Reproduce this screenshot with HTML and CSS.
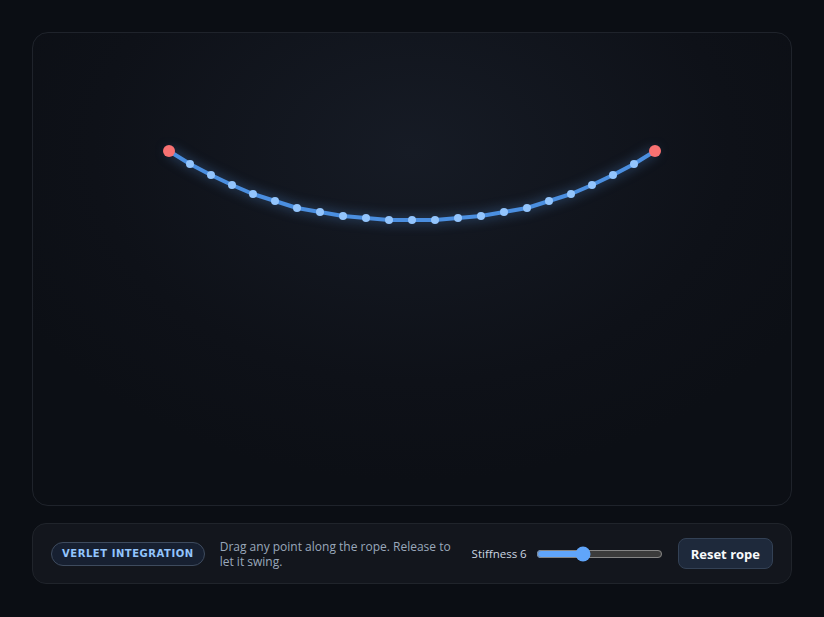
FILE: index.html
```html
<!DOCTYPE html>
<html lang="en">
<head>
  <meta charset="UTF-8">
  <title>Verlet rope</title>
  <link rel="stylesheet" href="styles.css">
</head>
<body>
  <div class="stage">
    <canvas id="rope" width="758" height="472"></canvas>
  </div>
  <div class="controls">
    <span class="badge">Verlet integration</span>
    <p class="hint">Drag any point along the rope. Release to let it swing.</p>
    <label class="stiffness">
      <span id="stiffLabel">Stiffness 6</span>
      <input type="range" id="stiff" min="1" max="15" value="6">
    </label>
    <button type="button" id="reset">Reset rope</button>
  </div>
  <script src="rope.js"></script>
</body>
</html>
```

FILE: styles.css
```css
*{
	box-sizing: border-box;
}
body{
	margin: 0;
	padding: 32px;
	background: #0b0e14;
	font-family: "Open Sans", "Noto Sans", sans-serif;
	color: #cbd5e1;
}
.stage{
	height: 474px;
	border: 1px solid #1f232b;
	border-radius: 16px;
	overflow: hidden;
	background: radial-gradient(ellipse 60% 70% at 50% 25%, #161b25 0%, #0e1118 70%, #0c0f15 100%);
}
.stage canvas{
	display: block;
}
.controls{
	margin-top: 17px;
	height: 61px;
	display: flex;
	align-items: center;
	padding: 0 18px;
	border: 1px solid #20242b;
	border-radius: 14px;
	background: #13161d;
}
.badge{
	flex-shrink: 0;
	white-space: nowrap;
	padding: 5px 10px 6px;
	border: 1px solid #3e4b5e;
	border-radius: 999px;
	background: #172031;
	color: #93c5fd;
	font-family: "DejaVu Sans", sans-serif;
	font-size: 10px;
	font-weight: bold;
	letter-spacing: 0.55px;
	text-transform: uppercase;
}
.hint{
	flex-shrink: 0;
	margin: 0 0 0 15px;
	width: 234px;
	font-size: 12px;
	line-height: 15px;
	color: #9aa8bb;
}
.stiffness{
	flex-shrink: 0;
	white-space: nowrap;
	margin-left: auto;
	display: flex;
	align-items: center;
	gap: 9px;
	font-size: 11.5px;
	color: #cbd5e1;
}
.stiffness input{
	width: 127px;
	margin: 0;
	accent-color: #60a5fa;
	color-scheme: dark;
}
#reset{
	flex-shrink: 0;
	white-space: nowrap;
	margin-left: 15px;
	height: 31px;
	padding: 0 12px;
	border: 1px solid #334155;
	border-radius: 8px;
	background: #1e293b;
	color: #f8fafc;
	font-family: inherit;
	font-size: 13px;
	font-weight: bold;
	cursor: pointer;
}
```

FILE: rope.js
```javascript
// rope at rest, hung between two pinned ends
var canvas = document.getElementById('rope'),
	ctx = canvas.getContext('2d'),
	slider = document.getElementById('stiff'),
	label = document.getElementById('stiffLabel');

var half = [[136,118],[157,131],[178,142],[199,152],[220,161],[242,168],
	[264,175],[287,179],[310,183],[333,185],[356,187],[379,187]];
var points = [];
half.forEach(function (p) { points.push({x: p[0], y: p[1]}); });
for (var i = half.length - 2; i >= 0; i--) {
	points.push({x: 758 - half[i][0], y: half[i][1]});
}

function draw () {
	ctx.clearRect(0, 0, canvas.width, canvas.height);
	ctx.save();
	ctx.shadowColor = 'rgba(96,165,250,0.55)';
	ctx.shadowBlur = 12;
	ctx.strokeStyle = '#4b8fe0';
	ctx.lineWidth = 4;
	ctx.lineJoin = ctx.lineCap = 'round';
	ctx.beginPath();
	points.forEach(function (p, i) {
		if (i === 0) ctx.moveTo(p.x, p.y);
		else ctx.lineTo(p.x, p.y);
	});
	ctx.stroke();
	ctx.restore();
	points.forEach(function (p, i) {
		var pinned = i === 0 || i === points.length - 1;
		ctx.beginPath();
		ctx.arc(p.x, p.y, pinned ? 6 : 4, 0, Math.PI * 2);
		ctx.fillStyle = pinned ? '#f87171' : '#93c5fd';
		ctx.fill();
	});
}

slider.oninput = function () {
	label.textContent = 'Stiffness ' + slider.value;
};
document.getElementById('reset').onclick = draw;
draw();
```
